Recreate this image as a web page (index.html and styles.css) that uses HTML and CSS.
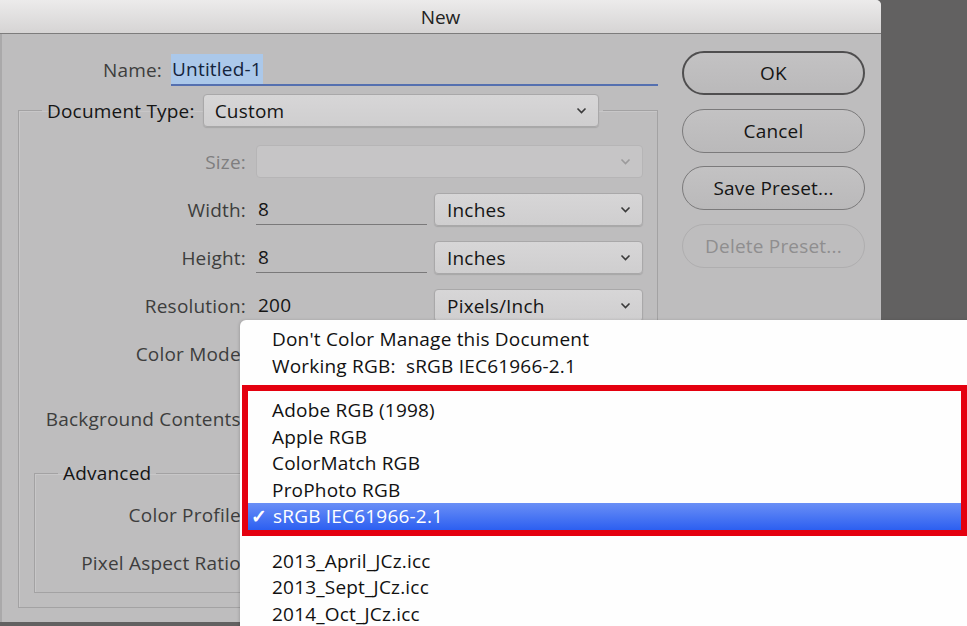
FILE: index.html
```html
<!DOCTYPE html>
<html lang="en">
  <head>
    <meta charset="UTF-8" />
    <title>New</title>
    <link rel="stylesheet" href="styles.css">
  </head>
  <body>
    <div class="screen">
      <div class="dialog">
        <div class="titlebar">New</div>
        <div class="dialog-body">
          <div class="form">
            <div class="name-row">
              <label class="name-label">Name:</label>
              <div class="name-input"><span class="selected-text">Untitled-1</span></div>
            </div>

            <fieldset class="group doc-group">
              <legend class="doc-legend">
                <span class="legend-text">Document Type:</span>
                <div class="select doc-select">
                  <span>Custom</span>
                  <svg class="chevron" width="11" height="7" viewBox="0 0 11 7"><path d="M1.5 1.5l4 4 4-4" /></svg>
                </div>
              </legend>

              <div class="rows">
                <div class="row">
                  <label class="disabled">Size:</label>
                  <div class="select is-disabled">
                    <span></span>
                    <svg class="chevron" width="11" height="7" viewBox="0 0 11 7"><path d="M1.5 1.5l4 4 4-4" /></svg>
                  </div>
                </div>
                <div class="row">
                  <label>Width:</label>
                  <div class="split">
                    <div class="text-input">8</div>
                    <div class="select unit">
                      <span>Inches</span>
                      <svg class="chevron" width="11" height="7" viewBox="0 0 11 7"><path d="M1.5 1.5l4 4 4-4" /></svg>
                    </div>
                  </div>
                </div>
                <div class="row">
                  <label>Height:</label>
                  <div class="split">
                    <div class="text-input">8</div>
                    <div class="select unit">
                      <span>Inches</span>
                      <svg class="chevron" width="11" height="7" viewBox="0 0 11 7"><path d="M1.5 1.5l4 4 4-4" /></svg>
                    </div>
                  </div>
                </div>
                <div class="row">
                  <label>Resolution:</label>
                  <div class="split">
                    <div class="text-input plain">200</div>
                    <div class="select unit">
                      <span>Pixels/Inch</span>
                      <svg class="chevron" width="11" height="7" viewBox="0 0 11 7"><path d="M1.5 1.5l4 4 4-4" /></svg>
                    </div>
                  </div>
                </div>
                <div class="row row-mode">
                  <label>Color Mode:</label>
                  <div class="select"><span></span></div>
                </div>
                <div class="row">
                  <label>Background Contents:</label>
                  <div class="select"><span></span></div>
                </div>
              </div>

              <fieldset class="group adv-group">
                <legend class="adv-legend">Advanced</legend>
                <div class="rows adv-rows">
                  <div class="row">
                    <label>Color Profile:</label>
                    <div class="select"><span></span></div>
                  </div>
                  <div class="row">
                    <label>Pixel Aspect Ratio:</label>
                    <div class="select"><span></span></div>
                  </div>
                </div>
              </fieldset>
            </fieldset>
          </div>

          <div class="buttons">
            <button class="btn default">OK</button>
            <button class="btn">Cancel</button>
            <button class="btn">Save Preset...</button>
            <button class="btn" disabled>Delete Preset...</button>
          </div>
        </div>
      </div>

      <!-- color profile pop-up, open over the dialog -->
      <div class="popup-menu">
        <div class="menu-item">Don't Color Manage this Document</div>
        <div class="menu-item">Working RGB:&nbsp; sRGB IEC61966-2.1</div>
        <div class="callout">
          <div class="menu-item">Adobe RGB (1998)</div>
          <div class="menu-item">Apple RGB</div>
          <div class="menu-item">ColorMatch RGB</div>
          <div class="menu-item">ProPhoto RGB</div>
          <div class="menu-item selected"><span class="check">✓</span>sRGB IEC61966-2.1</div>
        </div>
        <div class="menu-item">2013_April_JCz.icc</div>
        <div class="menu-item">2013_Sept_JCz.icc</div>
        <div class="menu-item">2014_Oct_JCz.icc</div>
      </div>
    </div>
  </body>
</html>
```

FILE: styles.css
```css
body {
  margin: 0;
  background-color: #626161;
  font-family: "Open Sans", "Liberation Sans", sans-serif;
  font-size: 19px;
  letter-spacing: 0.2px;
  overflow: hidden;
}
.screen {
  position: relative;
  width: 967px;
  height: 626px;
  overflow: hidden;
}
.dialog {
  width: 881px;
  height: 622px;
  background-color: #bebdbe;
  border-top-right-radius: 5px;
  box-shadow: inset 2px 0 0 #aaa9aa;
}
.titlebar {
  height: 33px;
  line-height: 35px;
  text-align: center;
  color: #222;
  font-size: 19px;
  letter-spacing: 0;
  background: linear-gradient(#ecebeb, #d6d4d4);
  border-bottom: 1px solid #7d7c7c;
  border-top-right-radius: 5px;
}
.dialog-body {
  display: flex;
  padding-top: 17px;
}
.form {
  width: 658px;
  padding-top: 3px;
}

/* name field */
.name-row {
  display: flex;
  align-items: center;
  height: 32px;
}
.name-label {
  width: 162px;
  text-align: right;
  color: #3d3d3d;
}
.name-input {
  margin-left: 9px;
  flex: 1;
  height: 30px;
  line-height: 30px;
  border-bottom: 2px solid #5570b0;
  color: #14243c;
}
.selected-text {
  background-color: #abc8ea;
  padding: 2px 1px;
}

/* group boxes */
.group {
  margin: 0;
  padding: 0;
  border: 1px solid #a3a2a3;
  box-shadow: 1px 1px 0 #c8c7c8 inset;
  min-width: 0;
}
.doc-group {
  margin: 8px 0 0 18px;
  padding: 18px 14px 14px 0;
}
.doc-legend {
  display: flex;
  align-items: center;
  gap: 8px;
  margin-left: 23px;
  padding: 0 4px 0 5px;
  color: #151515;
}
.adv-group {
  margin: 26px 0 0 15px;
  padding: 13px 0 13px 0;
}
.adv-legend {
  margin-left: 23px;
  padding: 0 5px 0 5px;
  color: #151515;
  line-height: 24px;
}

/* form rows */
.rows {
  display: flex;
  flex-direction: column;
  gap: 15px;
}
.row {
  display: grid;
  grid-template-columns: 227px 1fr;
  column-gap: 10px;
  align-items: center;
  height: 33px;
}
.row-mode {
  margin-bottom: 17px;
}
.adv-rows .row {
  grid-template-columns: 211px 1fr;
}
label {
  text-align: right;
  color: #3d3d3d;
  white-space: nowrap;
}
label.disabled {
  color: #7f7e7f;
}
.split {
  display: flex;
  gap: 7px;
}
.text-input {
  width: 171px;
  height: 32px;
  line-height: 33px;
  padding-left: 2px;
  box-sizing: border-box;
  border-bottom: 1px solid #7a797a;
  color: #151515;
}
.text-input.plain {
  border-bottom-color: transparent;
}

/* pop-up buttons */
.select {
  display: flex;
  align-items: center;
  justify-content: space-between;
  height: 33px;
  box-sizing: border-box;
  padding: 0 11px 0 12px;
  border: 1px solid #a9a8a9;
  border-radius: 4px;
  background: linear-gradient(#d7d6d7, #cfcecf);
  box-shadow: 0 1px 1px rgba(0, 0, 0, 0.12);
  color: #151515;
}
.select.is-disabled {
  background: #c6c5c6;
  border-color: #b6b5b6;
  box-shadow: none;
}
.select.is-disabled .chevron path {
  stroke: #9b9a9b;
}
.doc-select {
  width: 396px;
  padding-left: 11px;
}
.unit {
  width: 209px;
  padding-left: 12px;
}
.chevron path {
  fill: none;
  stroke: #3a3a3a;
  stroke-width: 1.6;
}

/* buttons column */
.buttons {
  display: flex;
  flex-direction: column;
  gap: 13.5px;
  margin-left: 24px;
  width: 183px;
}
.btn {
  height: 44px;
  border: 1px solid #7b7a7b;
  border-radius: 22px;
  background: linear-gradient(#c3c2c3, #bab9ba);
  font-family: inherit;
  font-size: 19px;
  letter-spacing: 0.2px;
  color: #151515;
  padding: 0;
}
.btn.default {
  border: 2px solid #4f4e4f;
}
.btn:disabled {
  border-color: #afaeaf;
  background: #bebdbe;
  color: #8f8e8f;
}

/* color profile menu */
.popup-menu {
  position: absolute;
  left: 240px;
  top: 320px;
  width: 740px;
  height: 320px;
  padding-top: 6px;
  background-color: #fefefe;
  border-top-left-radius: 6px;
  box-shadow: -1px 0 3px rgba(0, 0, 0, 0.15);
  color: #111;
}
.menu-item {
  height: 26.5px;
  line-height: 26.5px;
  padding-left: 32px;
  white-space: nowrap;
}
.callout {
  width: 713px;
  margin: 6px 0 12px 2px;
  padding-top: 6px;
  border: 6px solid #e4000f;
}
.callout .menu-item {
  padding-left: 24px;
}
.menu-item.selected {
  background: linear-gradient(#6a8ff6, #2c5ff1);
  color: #fff;
}
.check {
  display: inline-block;
  width: 22px;
  margin-left: -21px;
  font-weight: bold;
}
```
